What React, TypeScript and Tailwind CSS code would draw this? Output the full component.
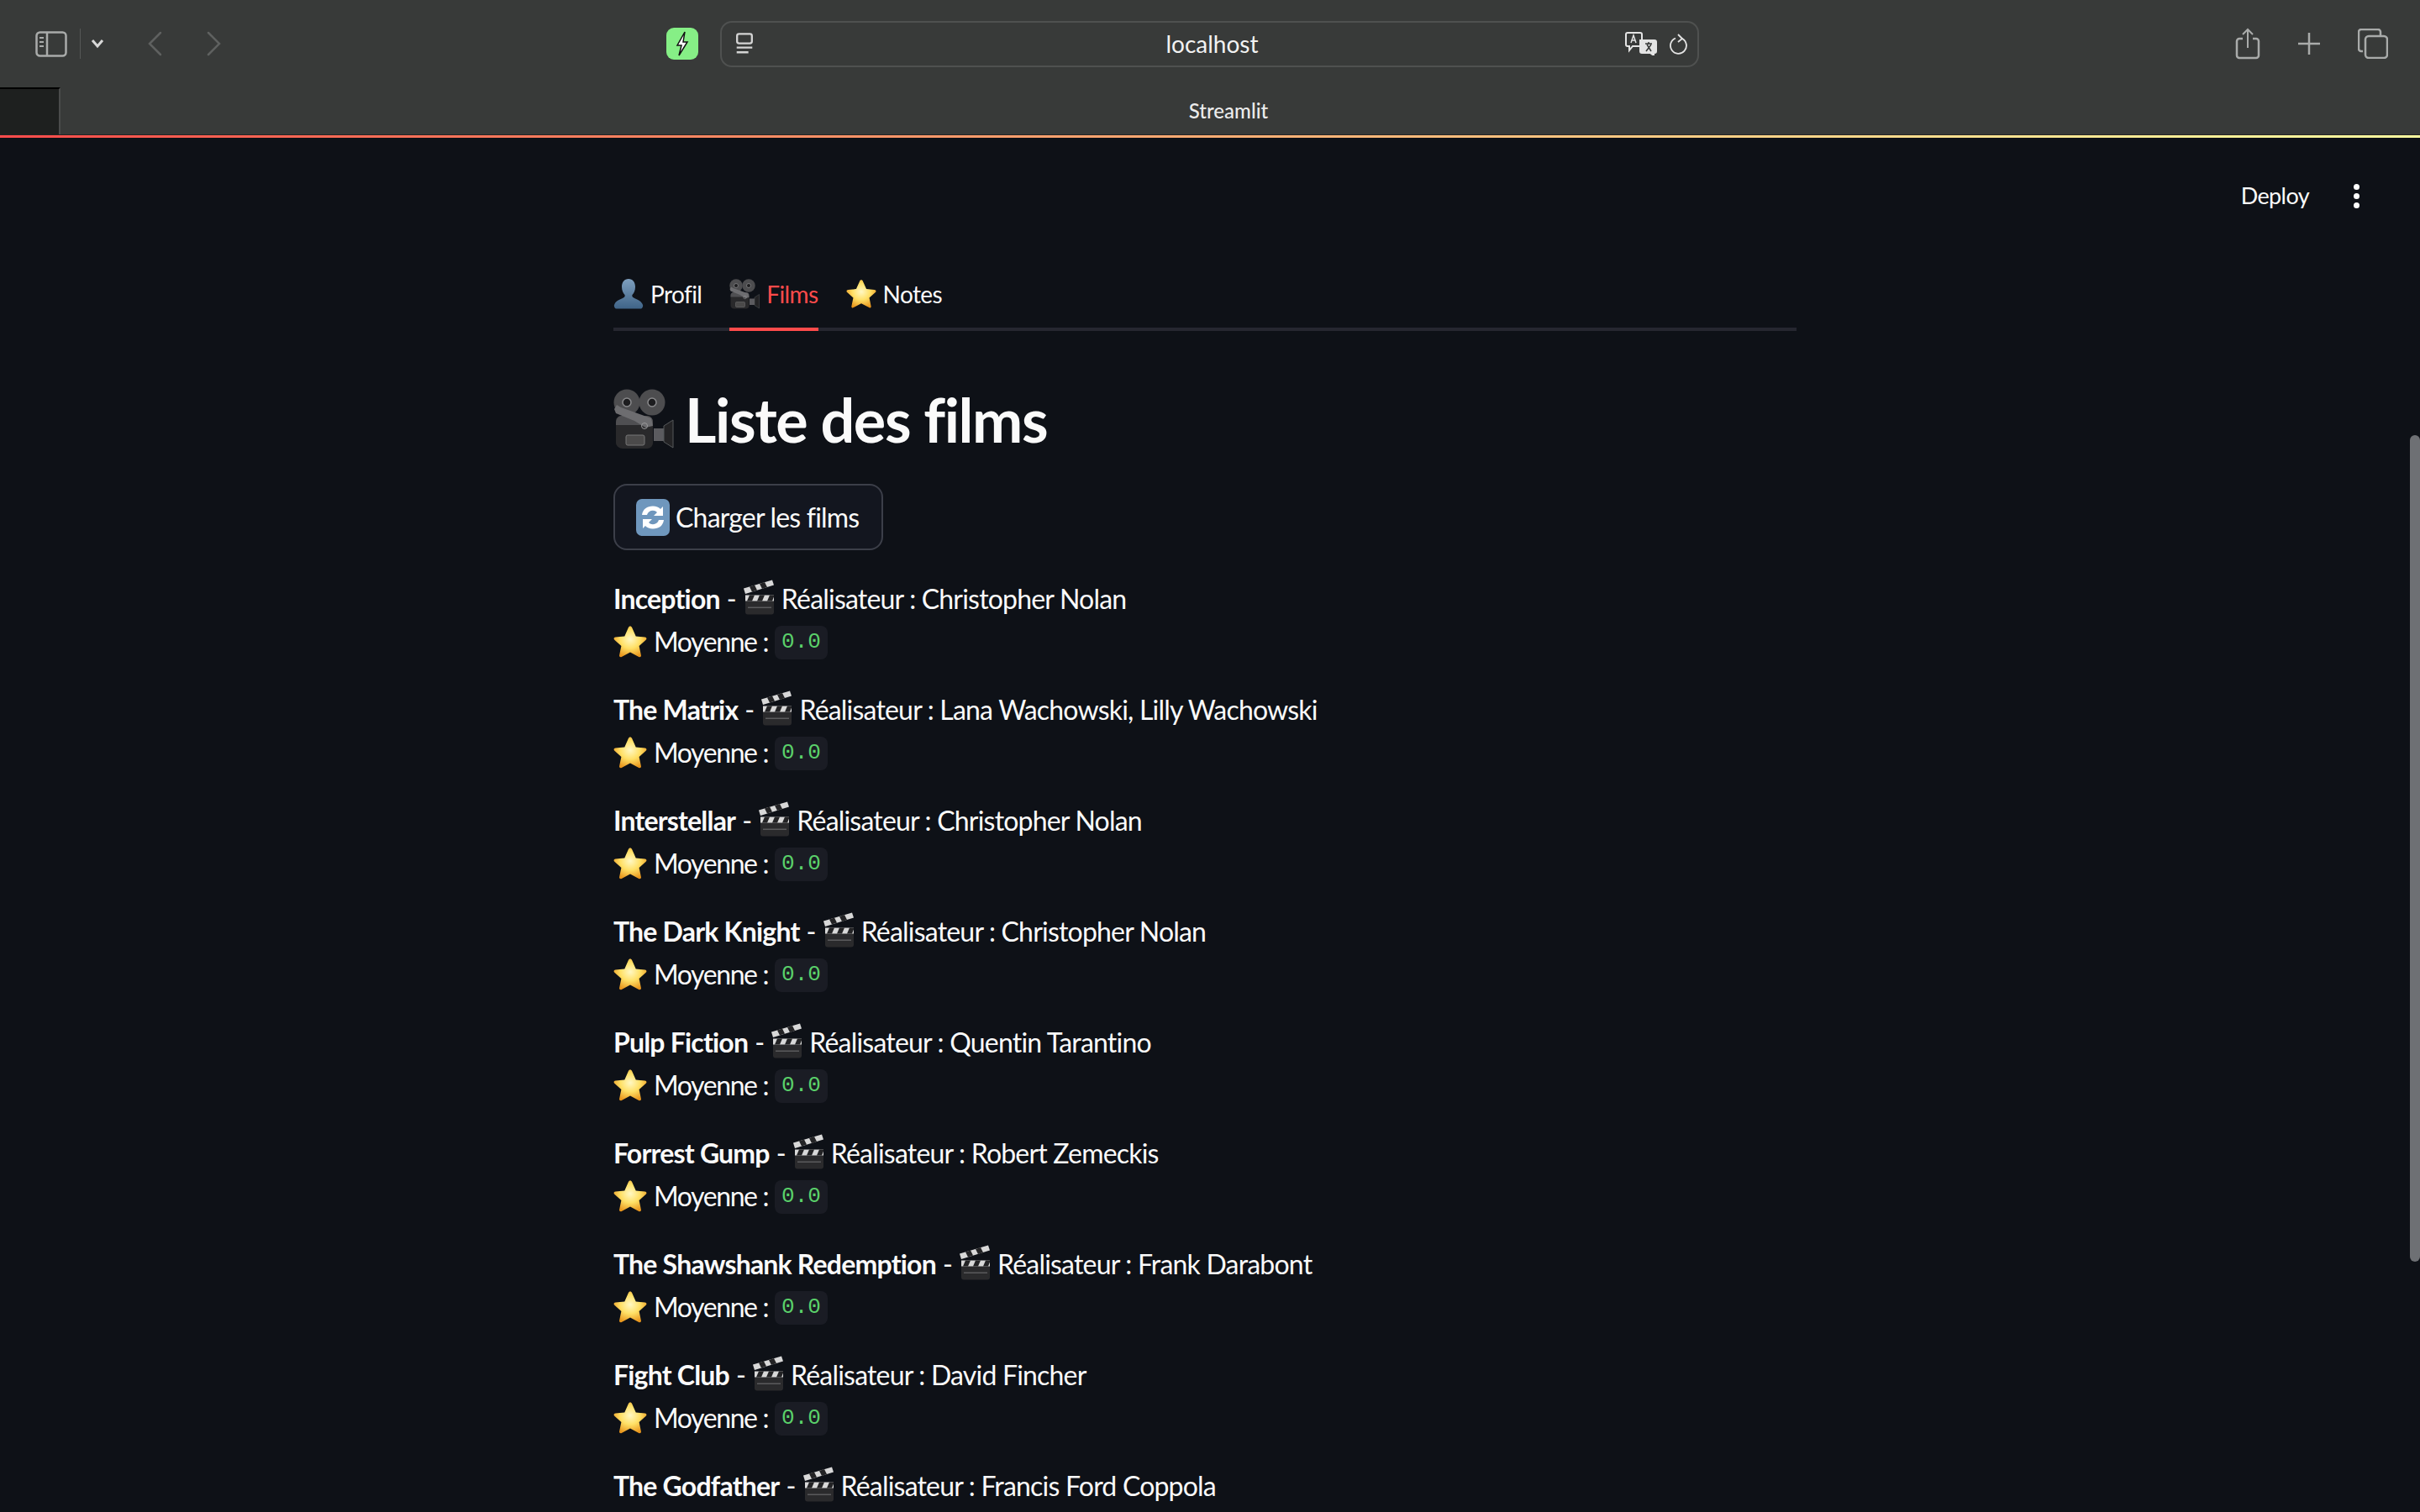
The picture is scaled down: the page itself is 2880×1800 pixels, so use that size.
const films = [
  { title: 'Inception', director: 'Christopher Nolan' },
  { title: 'The Matrix', director: 'Lana Wachowski, Lilly Wachowski' },
  { title: 'Interstellar', director: 'Christopher Nolan' },
  { title: 'The Dark Knight', director: 'Christopher Nolan' },
  { title: 'Pulp Fiction', director: 'Quentin Tarantino' },
  { title: 'Forrest Gump', director: 'Robert Zemeckis' },
  { title: 'The Shawshank Redemption', director: 'Frank Darabont' },
  { title: 'Fight Club', director: 'David Fincher' },
  { title: 'The Godfather', director: 'Francis Ford Coppola' },
];

// Apple-style emoji, drawn because no colour emoji font is installed
function StarEmoji({ className }: { className: string }) {
  return (
    <svg viewBox="0 0 40 40" className={className}>
      <defs>
        <radialGradient id="star" cx="0.5" cy="0.42" r="0.6">
          <stop offset="0" stopColor="#fff8c4" />
          <stop offset="0.5" stopColor="#ffe066" />
          <stop offset="1" stopColor="#e8951c" />
        </radialGradient>
      </defs>
      <path
        d="M20 1.500c1 0 1.700.6 2.200 1.700l4.500 10.200 10.800 1.100c1.900.2 2.600 2 1.200 3.300l-8.100 7.300 2.300 10.900c.4 1.800-1.200 2.800-2.700 1.900L20 32.500l-10.200 5.400c-1.500.9-3.100-.1-2.700-1.900l2.300-10.900-8.100-7.300c-1.400-1.300-.7-3.100 1.200-3.300l10.800-1.100 4.500-10.200C18.300 2.100 19 1.500 20 1.500z"
        fill="url(#star)"
      />
    </svg>
  );
}

function PersonEmoji({ className }: { className: string }) {
  return (
    <svg viewBox="0 0 36 36" className={className}>
      <defs>
        <linearGradient id="person" x1="0" y1="0" x2="0" y2="1">
          <stop offset="0" stopColor="#7e9fbe" />
          <stop offset="1" stopColor="#3f6488" />
        </linearGradient>
      </defs>
      <path
        d="M18 0c5 0 8 4 8 9.500 0 4-1.500 7.500-3.500 9.500-.6 1.800.2 3 2.500 4 4.500 1.800 8.500 3.500 10 8 .5 2-.5 4.500-2.500 4.500H3.500C1.500 35.500.5 33 1 31c1.500-4.500 5.500-6.200 10-8 2.300-1 3.100-2.200 2.500-4C11.500 17 10 13.500 10 9.500 10 4 13 0 18 0z"
        fill="url(#person)"
      />
    </svg>
  );
}

function CameraEmoji({ className }: { className: string }) {
  return (
    <svg viewBox="0 0 72 72" className={className}>
      <circle cx="16" cy="16" r="15.500" fill="#4d4d4f" />
      <circle cx="46" cy="16" r="15.500" fill="#4d4d4f" />
      <circle cx="16" cy="16" r="5" fill="#1d1d1f" stroke="#8a8a8c" strokeWidth="1.500" />
      <circle cx="46" cy="16" r="5" fill="#1d1d1f" stroke="#8a8a8c" strokeWidth="1.500" />
      <path d="M3 38c0-3 3-6 6-6h30c4 0 8 3 8 7v25c0 4-3 7-7 7H11c-4 0-8-3-8-7z" fill="#29292b" />
      <path d="M3 40c0-5 3-8 7-8h30c4 0 7 3 7 7v4H3z" fill="#4f4f52" />
      <path d="M1 24l3-5 5 3 36 13 2 9-9 2-13-8-22-9z" fill="#6d6d70" />
      <circle cx="37" cy="44" r="3.500" fill="none" stroke="#9a9a9c" strokeWidth="1" />
      <rect x="15" y="55" width="22" height="12" rx="2" fill="#4b4a4a" stroke="#767676" />
      <rect x="48" y="47" width="13" height="15" fill="#5b5b5f" />
      <path d="M60 44l11-7v33l-11-7z" fill="#232325" stroke="#55585a" />
    </svg>
  );
}

function ClapperEmoji({ className }: { className: string }) {
  return (
    <svg viewBox="0 0 38 42" className={className}>
      <path d="M3 20h34v19a3 3 0 0 1-3 3H6a3 3 0 0 1-3-3z" fill="#2a2a2c" />
      <rect x="3" y="19" width="34" height="7" fill="#d8d8d8" />
      <path d="M8 19h6l-3 7H5zM20 19h6l-3 7h-6zM32 19h5v2l-2 5h-6z" fill="#232325" />
      <path d="M1 11L35 1l2 6L3 17.500z" fill="#d8d8d8" />
      <path d="M8 9l6-2 3 6-6 2zM20 5.500l6-2 3 6-6 2z" fill="#232325" />
      <rect x="6" y="33" width="28" height="1.500" fill="#5a5a5c" />
    </svg>
  );
}

function RefreshEmoji({ className }: { className: string }) {
  return (
    <svg viewBox="0 0 40 44" className={className}>
      <rect x="0" y="0" width="40" height="44" rx="7" fill="#6f97bd" />
      <path d="M7 19c1-7 6-10.500 13-10.500 4 0 7 1.500 9 3.500l3-3v11H21l4-4c-1.500-1.500-3-2.200-5-2.200-3.500 0-6 2-7 5.200z" fill="#fff" />
      <path d="M33 25c-1 7-6 10.500-13 10.500-4 0-7-1.500-9-3.500l-3 3V24h11l-4 4c1.500 1.500 3 2.200 5 2.200 3.500 0 6-2 7-5.200z" fill="#fff" />
    </svg>
  );
}

function BrowserBar() {
  return (
    <div className="shrink-0 bg-[#383a39]">
      <div className="flex h-[104px] items-center pl-[42px] pr-[38px] text-[#a9abaa]">
        {/* sidebar + nav */}
        <svg viewBox="0 0 38 31" className="h-[31px] w-[38px]" fill="none" stroke="currentColor" strokeWidth="2.500">
          <rect x="1.500" y="1.500" width="35" height="28" rx="4" />
          <path d="M14 1.500v28" />
          <path d="M5 8h5M5 13h5M5 18h5" strokeWidth="2" />
        </svg>
        <div className="ml-[15px] h-[36px] w-px bg-[#555756]" />
        <svg viewBox="0 0 16 12" className="ml-[12px] h-[12px] w-[16px]" fill="none" stroke="#d8d8d8" strokeWidth="3">
          <path d="M2 2l6 7 6-7" />
        </svg>
        <svg viewBox="0 0 18 30" className="ml-[51px] h-[30px] w-[18px]" fill="none" stroke="#5f6160" strokeWidth="2.500" strokeLinecap="round">
          <path d="M16 2L3 15l13 13" />
        </svg>
        <svg viewBox="0 0 18 30" className="ml-[53px] h-[30px] w-[18px]" fill="none" stroke="#5f6160" strokeWidth="2.500" strokeLinecap="round">
          <path d="M2 2l13 13L2 28" />
        </svg>
        {/* extension */}
        <div className="ml-[529px] flex h-[38px] w-[38px] items-center justify-center rounded-[9px] bg-[#86ef86]">
          <svg viewBox="0 0 16 30" className="h-[30px] w-[16px]" fill="#fff" stroke="#111" strokeWidth="1.500">
            <path d="M11 1L2 17h5l-3 12 10-16H9z" />
          </svg>
        </div>
        {/* address field */}
        <div className="ml-[26px] flex h-[55px] w-[1165px] items-center rounded-[14px] border-2 border-[#4f5150] pl-[16px] pr-[12px]">
          <svg viewBox="0 0 22 28" className="h-[26px] w-[22px]" fill="none" stroke="#d4d4d4" strokeWidth="2.500">
            <rect x="1.500" y="1.500" width="19" height="12" rx="2.500" />
            <path d="M1 19h20M1 25h15" />
          </svg>
          <div className="flex-1 pl-[54px] text-center font-['Lato',sans-serif] text-[28px] leading-none text-[#f2f2f2]">localhost</div>
          <svg viewBox="0 0 38 28" className="h-[28px] w-[38px]" fill="none" stroke="#e4e4e4" strokeWidth="2">
            <path d="M3 1h15a2 2 0 0 1 2 2v12a2 2 0 0 1-2 2H9l-4 5v-5H3a2 2 0 0 1-2-2V3a2 2 0 0 1 2-2z" />
            <path d="M18 10h17a2 2 0 0 1 2 2v11a2 2 0 0 1-2 2h-1v3l-4-3H20a2 2 0 0 1-2-2z" fill="#e4e4e4" />
            <path d="M24 14h8M28 12v3M25 23l6-8M31 23l-5-8" stroke="#383a39" strokeWidth="1.500" />
            <path d="M7 13l3-9 3 9M8 10h4" strokeWidth="1.500" />
          </svg>
          <svg viewBox="0 0 22 26" className="ml-[14px] h-[26px] w-[22px]" fill="none" stroke="#e4e4e4" strokeWidth="1.800">
            <path d="M8 6.500a9.500 9.500 0 1 0 8 .5" />
            <path d="M9 1l5 5-5 4" transform="translate(2 1)" />
          </svg>
        </div>
        <div className="flex-1" />
        {/* right side actions */}
        <svg viewBox="0 0 30 38" className="h-[38px] w-[30px]" fill="none" stroke="currentColor" strokeWidth="2.500">
          <path d="M9 13H5a3 3 0 0 0-3 3v17a3 3 0 0 0 3 3h20a3 3 0 0 0 3-3V16a3 3 0 0 0-3-3h-4" />
          <path d="M15 24V2M9 8l6-6 6 6" strokeWidth="2" />
        </svg>
        <svg viewBox="0 0 28 28" className="ml-[44px] h-[28px] w-[28px]" fill="none" stroke="currentColor" strokeWidth="2.500">
          <path d="M14 1v26M1 14h26" />
        </svg>
        <svg viewBox="0 0 36 36" className="ml-[44px] h-[36px] w-[36px]" fill="none" stroke="currentColor" strokeWidth="2.500">
          <path d="M6 27H4a3 3 0 0 1-3-3V4a3 3 0 0 1 3-3h20a3 3 0 0 1 3 3v4" />
          <rect x="9" y="9" width="26" height="26" rx="4" />
        </svg>
      </div>
      <div className="relative flex h-[56px] items-center justify-center pl-[44px]">
        <div className="absolute left-0 top-0 h-full w-[72px] border-r-2 border-t-2 border-r-[#4a4b4b] border-t-black bg-[#1e201f]" />
        <span className="font-['Lato',sans-serif] text-[24px] font-medium text-[#ececec]">Streamlit</span>
      </div>
      <div className="h-px bg-[#232323]" />
      <div className="h-[3px] bg-gradient-to-r from-[#ff4b4b] to-[#ffffa0]" />
    </div>
  );
}

function Tab({ icon, label, active }: { icon: React.ReactNode; label: string; active?: boolean }) {
  return (
    <div className={`-mb-[4px] flex h-[92px] items-start gap-[8px] border-b-4 pt-[30px] ${active ? 'border-[#ff4b4b] text-[#ff4b4b]' : 'border-transparent text-[#fafafa]'}`}>
      {icon}
      <span className="text-[28px] leading-[36px] tracking-[-0.6px]">{label}</span>
    </div>
  );
}

function FilmRow({ title, director, showRating }: { title: string; director: string; showRating: boolean }) {
  return (
    <div className="text-[32px] leading-[51px] tracking-[-0.8px]">
      <div className="flex h-[51px] items-center">
        <strong className="font-bold">{title}</strong>
        <span className="ml-[8px]">-</span>
        <ClapperEmoji className="ml-[8px] h-[43px] w-[38px] -translate-y-[2px]" />
        <span className="ml-[8px]">Réalisateur : {director}</span>
      </div>
      {showRating && (
        <div className="flex h-[51px] items-center">
          <StarEmoji className="size-[40px]" />
          <span className="ml-[8px] tracking-[-1.4px]">Moyenne :</span>
          <code className="ml-[8px] mt-[2px] flex h-[40px] w-[63px] items-center justify-center rounded-[8px] bg-[#1a1c24] font-['Liberation_Mono',monospace] text-[26px] tracking-normal text-[#5ad16a]">
            0.0
          </code>
        </div>
      )}
    </div>
  );
}

export default function App() {
  return (
    <div className="flex h-[1800px] w-[2880px] flex-col overflow-hidden bg-[#0e1117] font-['Lato',sans-serif] text-[#fafafa]">
      <BrowserBar />
      <main className="relative flex-1 overflow-hidden">
        {/* header */}
        <div className="flex h-[138px] items-center justify-end pr-[72px]">
          <span className="text-[27px] tracking-[-0.6px]">Deploy</span>
          <div className="ml-[53px] flex flex-col gap-[4px]">
            <span className="size-[7px] rounded-full bg-white" />
            <span className="size-[7px] rounded-full bg-white" />
            <span className="size-[7px] rounded-full bg-white" />
          </div>
        </div>

        <div className="ml-[730px] w-[1408px]">
          {/* tabs */}
          <div className="flex h-[92px] gap-[33px] border-b-4 border-[#262730]">
            <Tab icon={<PersonEmoji className="size-[36px]" />} label="Profil" />
            <Tab icon={<CameraEmoji className="size-[36px]" />} label="Films" active />
            <Tab icon={<StarEmoji className="size-[36px]" />} label="Notes" />
          </div>

          <h1 className="mt-[69px] flex h-[72px] items-center gap-[13px] text-[72px] font-bold leading-none tracking-[-1.4px]">
            <CameraEmoji className="size-[72px] shrink-0" />
            Liste des films
          </h1>

          <button className="mt-[41px] flex h-[79px] w-[321px] items-center gap-[7px] rounded-[16px] border-2 border-[#3c3f49] bg-[#13161f] pl-[25px] text-[32px] tracking-[-0.8px]">
            <RefreshEmoji className="h-[44px] w-[40px]" />
            Charger les films
          </button>

          <div className="mt-[32px] flex flex-col gap-[30px]">
            {/* the last film's rating line is below the fold */}
            {films.map((film, i) => (
              <FilmRow key={film.title} title={film.title} director={film.director} showRating={i < films.length - 1} />
            ))}
          </div>
        </div>

        {/* scrollbar */}
        <div className="absolute right-0 top-[354px] h-[984px] w-[12px] rounded-full bg-[#6e7074]" />
      </main>
    </div>
  );
}
